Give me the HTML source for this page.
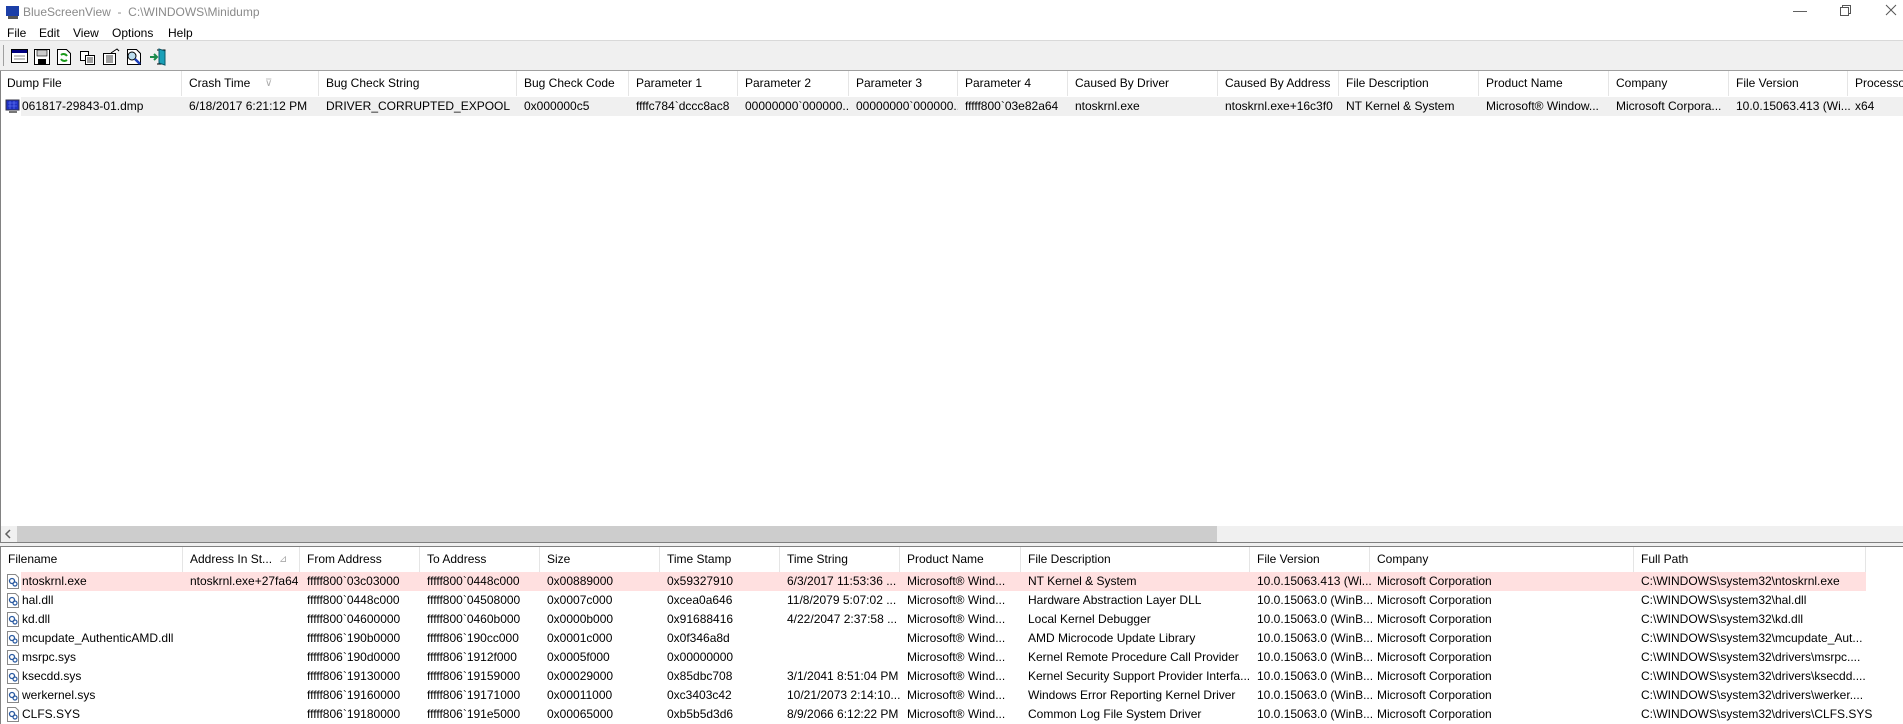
<!DOCTYPE html>
<html><head><meta charset="utf-8"><style>
*{margin:0;padding:0;box-sizing:border-box}
body{width:1903px;height:724px;overflow:hidden;background:#fff;font-family:"Liberation Sans",sans-serif;font-size:12px;color:#000;position:relative}
.a{position:absolute;white-space:nowrap}
.hdr{position:absolute;left:0;width:1903px;height:25px;background:#fff}
.hdr div{position:absolute;top:0;height:25px;line-height:25px;padding-left:7px;border-right:1px solid #e5e5e5;white-space:nowrap;overflow:hidden}
.row{position:absolute;left:0;width:1903px;height:19px}
.row div{position:absolute;top:0;height:19px;line-height:19px;padding-left:7px;white-space:nowrap;overflow:hidden}
.ic{position:absolute;left:5px;top:1px;width:16px;height:17px}
</style></head><body>
<!-- title -->
<svg class="a" style="left:5px;top:5px" width="16" height="15" viewBox="0 0 16 15"><rect x="1" y="1" width="13" height="10" fill="#1c3fa8"/><rect x="3" y="11" width="10" height="3" fill="#555"/></svg>
<div class="a" style="left:23px;top:5px;color:#8a8a8a;font-size:12px">BlueScreenView &nbsp;- &nbsp;C:\WINDOWS\Minidump</div>
<div class="a" style="left:1793px;top:2px;color:#555;font-size:14px">&#8212;</div>
<svg class="a" style="left:1840px;top:5px" width="12" height="12"><rect x="0.5" y="2.5" width="8" height="8" fill="none" stroke="#555"/><path d="M2.5 2.5V0.5H10.5V8.5H8.5" fill="none" stroke="#555"/></svg>
<svg class="a" style="left:1885px;top:4px" width="12" height="12"><path d="M1 1L11 11M11 1L1 11" stroke="#555"/></svg>
<!-- menu -->
<div class="a" style="left:7px;top:26px">File</div>
<div class="a" style="left:39px;top:26px">Edit</div>
<div class="a" style="left:73px;top:26px">View</div>
<div class="a" style="left:112px;top:26px">Options</div>
<div class="a" style="left:168px;top:26px">Help</div>
<!-- toolbar -->
<div class="a" style="left:0;top:40px;width:1903px;height:31px;background:#f0f0f0;border-top:1px solid #d9d9d9"></div>
<div class="a" style="left:3px;top:45px;width:1px;height:21px;background:#a0a0a0"></div>
<svg class="a" style="left:11px;top:48px" width="160" height="18">
<rect x="0.5" y="1.5" width="16" height="13" fill="#fff" stroke="#000"/><rect x="1" y="2" width="15" height="3" fill="#000080"/><path d="M3 8H14M3 11H14" stroke="#888"/>
<rect x="23.5" y="1.5" width="15" height="15" fill="#fff" stroke="#000"/><rect x="26" y="2" width="10" height="6" fill="#ccc" stroke="#000" stroke-width="0.6"/><rect x="27" y="11" width="8" height="5" fill="#000"/>
<path d="M46.5 1.5H55.5L59.5 5.5V16.5H46.5Z" fill="#fff" stroke="#000"/><path d="M50 7a4 4 0 0 1 6 1M56 12a4 4 0 0 1-6-1" stroke="#1a9a1a" stroke-width="2" fill="none"/>
<rect x="69.5" y="3.5" width="8" height="9" fill="#fff" stroke="#000"/><rect x="74.5" y="7.5" width="9" height="9" fill="#fff" stroke="#000"/><path d="M76 10H82M76 12H82M76 14H82" stroke="#000" stroke-width="0.7"/>
<path d="M92.5 5.5H104.5V16.5H92.5Z" fill="#fff" stroke="#000"/><path d="M95 8H102M95 10H102M95 12H102M95 14H102" stroke="#000" stroke-width="0.8"/><path d="M100 5L106 1L108 3" stroke="#000" fill="#fff"/>
<path d="M116.5 1.5H125.5L129.5 5.5V16.5H116.5Z" fill="#fff" stroke="#000"/><circle cx="121" cy="8" r="4" fill="#bde" stroke="#000"/><path d="M124 11L129 16" stroke="#1d3fbb" stroke-width="2.5"/>
<path d="M146 2H154V16H146" fill="none" stroke="#000"/><path d="M148 1L154 3V17L148 15Z" fill="#1aa0b8" stroke="#0a5a6a"/><path d="M139 9H146M143 6L146 9L143 12" stroke="#1a8a4a" stroke-width="2" fill="none"/>
</svg>
<!-- top header -->
<div class="a" style="left:0;top:70px;width:1903px;height:1px;background:#a0a0a0"></div>
<div class="hdr" style="top:71px">
<div style="left:0;width:182px">Dump File</div>
<div style="left:182px;width:137px">Crash Time<span style="position:absolute;left:83px;color:#aaa;font-size:10px">&#8893;</span></div>
<div style="left:319px;width:198px">Bug Check String</div>
<div style="left:517px;width:112px">Bug Check Code</div>
<div style="left:629px;width:109px">Parameter 1</div>
<div style="left:738px;width:111px">Parameter 2</div>
<div style="left:849px;width:109px">Parameter 3</div>
<div style="left:958px;width:110px">Parameter 4</div>
<div style="left:1068px;width:150px">Caused By Driver</div>
<div style="left:1218px;width:121px">Caused By Address</div>
<div style="left:1339px;width:140px">File Description</div>
<div style="left:1479px;width:130px">Product Name</div>
<div style="left:1609px;width:120px">Company</div>
<div style="left:1729px;width:119px">File Version</div>
<div style="left:1848px;width:60px;border:none">Processor</div>
</div>
<div class="row" style="top:97px">
<svg class="ic" viewBox="0 0 16 17"><rect x="1" y="2" width="13" height="10" fill="#2030c0" stroke="#334"/><path d="M3 5H12M3 8H12M5 3V11M9 3V11" stroke="#6a80ff" stroke-width="0.6"/><rect x="4" y="13" width="8" height="2" fill="#777"/></svg>
<div style="left:21px;width:1882px;height:19px;background:#f0f0f0;padding:0"></div>
<div style="left:15px">061817-29843-01.dmp</div>
<div style="left:182px">6/18/2017 6:21:12 PM</div>
<div style="left:319px">DRIVER_CORRUPTED_EXPOOL</div>
<div style="left:517px">0x000000c5</div>
<div style="left:629px;width:109px">ffffc784`dccc8ac8</div>
<div style="left:738px;width:111px">00000000`000000...</div>
<div style="left:849px;width:109px">00000000`000000...</div>
<div style="left:958px">fffff800`03e82a64</div>
<div style="left:1068px">ntoskrnl.exe</div>
<div style="left:1218px">ntoskrnl.exe+16c3f0</div>
<div style="left:1339px">NT Kernel &amp; System</div>
<div style="left:1479px">Microsoft® Window...</div>
<div style="left:1609px">Microsoft Corpora...</div>
<div style="left:1729px">10.0.15063.413 (Wi...</div>
<div style="left:1848px">x64</div>
</div>
<!-- scrollbar -->
<div class="a" style="left:0;top:71px;width:1px;height:471px;background:#828282"></div>
<div class="a" style="left:1px;top:526px;width:1902px;height:16px;background:#f0f0f0"></div>
<div class="a" style="left:17px;top:526px;width:1200px;height:16px;background:#cdcdcd"></div>
<svg class="a" style="left:4px;top:529px" width="10" height="10"><path d="M6 1L2 5L6 9" stroke="#606060" stroke-width="1.5" fill="none"/></svg>
<div class="a" style="left:0;top:542px;width:1903px;height:1px;background:#808080"></div>
<div class="a" style="left:0;top:543px;width:1903px;height:3px;background:#f0f0f0"></div>
<div class="a" style="left:0;top:546px;width:1903px;height:1px;background:#808080"></div>
<div class="a" style="left:0;top:547px;width:1px;height:177px;background:#828282"></div>
<!-- lower header -->
<div class="hdr" style="top:547px;left:1px;height:25px">
<div style="left:0;width:182px">Filename</div>
<div style="left:182px;width:117px">Address In St...<span style="position:absolute;left:96px;color:#aaa;font-size:10px">&#8895;</span></div>
<div style="left:299px;width:120px">From Address</div>
<div style="left:419px;width:120px">To Address</div>
<div style="left:539px;width:120px">Size</div>
<div style="left:659px;width:120px">Time Stamp</div>
<div style="left:779px;width:120px">Time String</div>
<div style="left:899px;width:121px">Product Name</div>
<div style="left:1020px;width:229px">File Description</div>
<div style="left:1249px;width:120px">File Version</div>
<div style="left:1369px;width:264px">Company</div>
<div style="left:1633px;width:232px">Full Path</div>
</div>
<div id="rows"></div>
<script>
var d=[
["ntoskrnl.exe","ntoskrnl.exe+27fa64","fffff800`03c03000","fffff800`0448c000","0x00889000","0x59327910","6/3/2017 11:53:36 ...","NT Kernel &amp; System","10.0.15063.413 (Wi...","ntoskrnl.exe"],
["hal.dll","","fffff800`0448c000","fffff800`04508000","0x0007c000","0xcea0a646","11/8/2079 5:07:02 ...","Hardware Abstraction Layer DLL","10.0.15063.0 (WinB...","hal.dll"],
["kd.dll","","fffff800`04600000","fffff800`0460b000","0x0000b000","0x91688416","4/22/2047 2:37:58 ...","Local Kernel Debugger","10.0.15063.0 (WinB...","kd.dll"],
["mcupdate_AuthenticAMD.dll","","fffff806`190b0000","fffff806`190cc000","0x0001c000","0x0f346a8d","","AMD Microcode Update Library","10.0.15063.0 (WinB...","mcupdate_Aut..."],
["msrpc.sys","","fffff806`190d0000","fffff806`1912f000","0x0005f000","0x00000000","","Kernel Remote Procedure Call Provider","10.0.15063.0 (WinB...","drivers\\msrpc...."],
["ksecdd.sys","","fffff806`19130000","fffff806`19159000","0x00029000","0x85dbc708","3/1/2041 8:51:04 PM","Kernel Security Support Provider Interfa...","10.0.15063.0 (WinB...","drivers\\ksecdd...."],
["werkernel.sys","","fffff806`19160000","fffff806`19171000","0x00011000","0xc3403c42","10/21/2073 2:14:10...","Windows Error Reporting Kernel Driver","10.0.15063.0 (WinB...","drivers\\werker...."],
["CLFS.SYS","","fffff806`19180000","fffff806`191e5000","0x00065000","0xb5b5d3d6","8/9/2066 6:12:22 PM","Common Log File System Driver","10.0.15063.0 (WinB...","drivers\\CLFS.SYS"]];
var h="";
d.forEach(function(r,i){
h+='<div class="row" style="top:'+(572+19*i)+'px">';
if(i==0)h+='<div style="left:21px;width:1845px;background:#ffe0e0;padding:0"></div>';
h+='<svg class="ic" viewBox="0 0 16 17"><path d="M2.5 1.5H10.5L13.5 4.5V15.5H2.5Z" fill="#fff" stroke="#888"/><circle cx="7" cy="8" r="2.5" fill="none" stroke="#2a5aa0" stroke-width="1.3"/><circle cx="10" cy="11" r="2" fill="none" stroke="#2a5aa0" stroke-width="1.2"/></svg>';
h+='<div style="left:15px">'+r[0]+'</div><div style="left:183px">'+r[1]+'</div><div style="left:300px">'+r[2]+'</div><div style="left:420px">'+r[3]+'</div><div style="left:540px">'+r[4]+'</div><div style="left:660px">'+r[5]+'</div><div style="left:780px;width:120px">'+r[6]+'</div><div style="left:900px">Microsoft® Wind...</div><div style="left:1021px;width:229px">'+r[7]+'</div><div style="left:1250px">'+r[8]+'</div><div style="left:1370px">Microsoft Corporation</div><div style="left:1634px">C:\\WINDOWS\\system32\\'+r[9]+'</div></div>';
});
document.getElementById("rows").innerHTML=h;
</script>
</body></html>
